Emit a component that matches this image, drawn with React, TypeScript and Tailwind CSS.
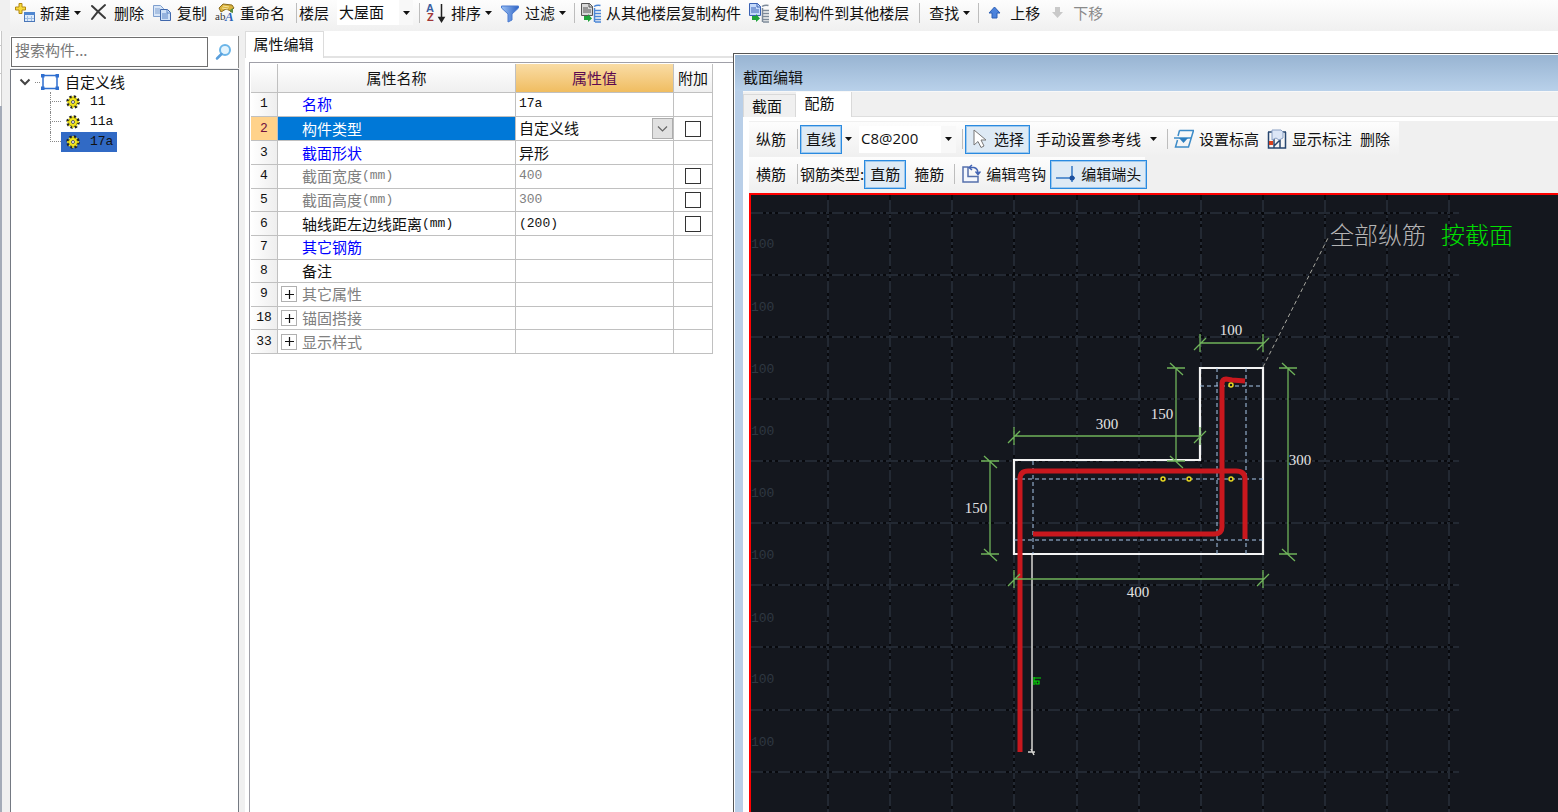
import clsx from 'clsx'
import type { ReactNode } from 'react'

const floors = ['大屋面']
const rebarSpecs = ['C8@200']
const componentTypes = ['自定义线']

interface PropertyRow {
  no: number
  name: string
  unit?: string
  value?: string
  tone?: 'link' | 'muted'
  extra?: boolean
  group?: boolean
  selected?: boolean
}

const properties: PropertyRow[] = [
  { no: 1, name: '名称', value: '17a', tone: 'link' },
  { no: 2, name: '构件类型', value: '自定义线', extra: true, selected: true },
  { no: 3, name: '截面形状', value: '异形', tone: 'link' },
  { no: 4, name: '截面宽度', unit: '(mm)', value: '400', tone: 'muted', extra: true },
  { no: 5, name: '截面高度', unit: '(mm)', value: '300', tone: 'muted', extra: true },
  { no: 6, name: '轴线距左边线距离', unit: '(mm)', value: '(200)', extra: true },
  { no: 7, name: '其它钢筋', tone: 'link' },
  { no: 8, name: '备注' },
  { no: 9, name: '其它属性', tone: 'muted', group: true },
  { no: 18, name: '锚固搭接', tone: 'muted', group: true },
  { no: 33, name: '显示样式', tone: 'muted', group: true },
]

function Caret() {
  return (
    <svg width="7" height="4" viewBox="0 0 7 4" className="shrink-0">
      <path d="M0 0h7L3.5 4z" fill="#111" />
    </svg>
  )
}

function NewIcon() {
  return (
    <svg width="20" height="20" viewBox="0 0 20 20">
      <rect x="9.5" y="9.5" width="10" height="9" fill="#dcebfb" stroke="#4a76b8" />
      <path d="M9 9h11v3H9z" fill="#4f86d0" />
      <path d="M12.5 13v5M16.5 13v5M10 15.5h9" stroke="#9dbce4" />
      <path d="M4 .5h3V4h3.5v3H7v3.500H4V7H.5V4H4z" fill="#f6d93c" stroke="#b58a12" />
    </svg>
  )
}

function DeleteIcon() {
  return (
    <svg width="20" height="20" viewBox="0 0 20 20">
      <path d="M3 3l13 12M16 2C11 6 7 10 3 16" fill="none" stroke="#3a3a3a" strokeWidth="2" strokeLinecap="round" />
    </svg>
  )
}

function CopyIcon() {
  return (
    <svg width="20" height="20" viewBox="0 0 20 20">
      <path d="M1.500 2.500h7l3 3v8h-10z" fill="#d8e6f8" stroke="#7f9fce" />
      <path d="M3 6h5M3 8h5M3 10h5" stroke="#7f9fce" />
      <path d="M8.500 6.500h7l3 3v8h-10z" fill="#cfe0f7" stroke="#3f67ab" />
      <path d="M15 6.500v3.500h3.500M10 11h6M10 13h6M10 15h6" fill="none" stroke="#5b84c6" />
    </svg>
  )
}

function RenameIcon() {
  return (
    <svg width="20" height="20" viewBox="0 0 20 20" className="overflow-visible">
      <path d="M4 5l4-4 9 1 2 3-3 3-5-2-5 3z" fill="#d9b23c" stroke="#8b6c1d" />
      <path d="M8 3l6 1M7 5l6 1" stroke="#f7e49a" />
      <path d="M15 7l3-2v5l-3-1z" fill="#5a8a3e" />
      <text x="0" y="17" fontSize="11" fontFamily="Liberation Serif, serif" fill="#333">ab</text>
      <text x="10" y="18" fontSize="13" fontStyle="italic" fontWeight="700" fontFamily="Liberation Serif, serif" fill="#2d62b8">A</text>
    </svg>
  )
}

function SortIcon() {
  return (
    <svg width="20" height="20" viewBox="0 0 20 20" className="overflow-visible">
      <text x="0" y="9" fontSize="11" fontWeight="700" fontFamily="Liberation Sans, sans-serif" fill="#3b5f9f">A</text>
      <text x="1" y="18" fontSize="11" fontWeight="700" fontFamily="Liberation Sans, sans-serif" fill="#a03636">Z</text>
      <path d="M15.500 1v15M13 14.500h5l-2.500 4z" stroke="#222" strokeWidth="1.500" fill="#222" />
    </svg>
  )
}

function FilterIcon() {
  return (
    <svg width="20" height="20" viewBox="0 0 20 20">
      <defs>
        <linearGradient id="funnel">
          <stop offset="0" stopColor="#9cc2f5" />
          <stop offset="1" stopColor="#2d62c4" />
        </linearGradient>
      </defs>
      <path d="M1.500 3h17v2L12 11v6l-4 2v-8L1.500 5z" fill="url(#funnel)" stroke="#4a7bd0" />
    </svg>
  )
}

function FloorCopyIcon({ page, pageFill, stack }: { page: string, pageFill: string, stack: string }) {
  return (
    <svg width="20" height="20" viewBox="0 0 20 20">
      <path d="M.5.500h8l3 3v9H.5z" fill={pageFill} stroke={page} />
      <path d="M8 0v4h4M2 5h5M2 7h8M2 9h8" fill="none" stroke={page} />
      <path d="M3 13h4v-2l4 4.500L7 19v-2H3z" fill="#20a43a" />
      <path d="M13.500 5v14M13 3.500q3-2 6.500-1M14 7.500h6M14 10.500h6M14 13.500h6M14 16.500h6M14 19h6" stroke={stack} strokeWidth="1.500" fill="none" />
    </svg>
  )
}

function MoveIcon({ down }: { down?: boolean }) {
  return (
    <svg width="20" height="20" viewBox="0 0 20 20">
      {down
        ? <path d="M7 4h5v5h3l-5.500 6L4 9h3z" fill="#c9c9c9" />
        : <path d="M9.500 4l5.500 6h-3v5H7v-5H4z" fill="#4b82dc" stroke="#2c5fb5" />}
    </svg>
  )
}

function Separator({ className = 'mr-[6px]' }: { className?: string }) {
  return <span className={clsx('h-5 w-px shrink-0 bg-[#bdbdbd]', className)} />
}

interface ToolProps {
  icon?: ReactNode
  label: string
  caret?: boolean
  disabled?: boolean
}

function Tool({ icon, label, caret, disabled }: ToolProps) {
  return (
    <button
      type="button"
      disabled={disabled}
      className="mr-2 flex shrink-0 items-center whitespace-nowrap disabled:text-[#8a8a8a]"
    >
      {icon && <span className="mr-[5px]">{icon}</span>}
      {label}
      {caret && <span className="ml-1 flex"><Caret /></span>}
    </button>
  )
}

function MainToolbar() {
  return (
    <div className="ml-[10px] flex h-[31px] shrink-0 items-center overflow-hidden bg-linear-to-b from-[#fdfdfd] to-[#f0f0f0] pb-[6px] pl-[5px]">
      <Tool icon={<NewIcon />} label="新建" caret />
      <Tool icon={<DeleteIcon />} label="删除" />
      <Tool icon={<CopyIcon />} label="复制" />
      <Tool icon={<RenameIcon />} label="重命名" />
      <Separator className="mr-[2px] ml-[3px]" />
      <label htmlFor="floor" className="mr-2 shrink-0">楼层</label>
      <div className="relative mr-[6px] h-[25px] w-[76px] shrink-0 bg-white">
        <select id="floor" className="h-full w-full appearance-none pb-[2px] pl-[2px] outline-none">
          {floors.map(floor => <option key={floor}>{floor}</option>)}
        </select>
        <span className="pointer-events-none absolute inset-y-0 right-0 flex w-[14px] items-center justify-center bg-[#f8f8f8]">
          <Caret />
        </span>
      </div>
      <Separator />
      <Tool icon={<SortIcon />} label="排序" caret />
      <Tool icon={<FilterIcon />} label="过滤" caret />
      <Separator />
      <Tool icon={<FloorCopyIcon page="#555" pageFill="#d9d9d9" stack="#4b86d6" />} label="从其他楼层复制构件" />
      <Tool icon={<FloorCopyIcon page="#3a62b4" pageFill="#c5dafb" stack="#7d8a99" />} label="复制构件到其他楼层" />
      <Separator className="mr-[9px] ml-[2px]" />
      <Tool label="查找" caret />
      <Separator />
      <Tool icon={<MoveIcon />} label="上移" />
      <Tool icon={<MoveIcon down />} label="下移" disabled />
    </div>
  )
}

function Gear() {
  return (
    <svg width="14" height="14" viewBox="0 0 14 14" className="shrink-0">
      <circle cx="7" cy="7" r="5.500" fill="none" stroke="#222" strokeWidth="2.500" strokeDasharray="2.300 2.020" />
      <circle cx="7" cy="7" r="4.500" fill="#f2e51d" stroke="#4c4a08" />
      <path d="M7 1v12M1 7h12M3 3l8 8M11 3l-8 8" stroke="#f2e51d" strokeWidth="1.500" />
      <circle cx="7" cy="7" r="1.500" fill="#fff" stroke="#555" />
    </svg>
  )
}

function ComponentTree() {
  return (
    <aside className="flex w-[229px] shrink-0 flex-col bg-[#f0f0f0] pt-[5px]">
      <div className="flex h-8 shrink-0 border-r border-[#8c8c8c] bg-white">
        <input
          type="text"
          aria-label="搜索构件"
          placeholder="搜索构件..."
          className="my-px ml-px w-[197px] border border-[#6e6e6e] bg-white px-[3px] pb-1 outline-none placeholder:text-[#777]"
        />
        <button type="button" aria-label="搜索" className="flex flex-1 items-center justify-center">
          <svg width="18" height="18" viewBox="0 0 18 18">
            <circle cx="11" cy="7" r="5" fill="#e4f4fd" stroke="#6bb5e8" strokeWidth="2" />
            <path d="M7.500 11L3 15.500" stroke="#5a9fdc" strokeWidth="2.500" strokeLinecap="round" />
          </svg>
        </button>
      </div>
      <div className="mt-px min-h-0 flex-1 border border-b-0 border-[#747982] bg-white pt-[2px] pl-px">
        <div className="flex h-5 items-center pl-[7px]">
          <svg width="12" height="8" viewBox="0 0 12 8">
            <path d="M1.500 1.500L6 6l4.500-4.500" fill="none" stroke="#444" strokeWidth="2" />
          </svg>
          <span className="ml-1 w-[5px] border-t border-dotted border-[#888]" />
          <svg width="20" height="18" viewBox="0 0 20 18" className="mr-[5px]">
            <path d="M3 2.500h14v13H3z" fill="#fff" stroke="#2f6fd0" strokeWidth="1.500" />
            <path d="M1 1h3.500v3.500H1zM15.500 1H19v3.500h-3.500zM1 13.500h3.500V17H1zM15.500 13.500H19V17h-3.500z" fill="#2f6fd0" />
          </svg>
          自定义线
        </div>
        <ul className="ml-[38px]">
          {['11', '11a', '17a'].map((name, i) => (
            <li key={name} className="flex h-5">
              <span className="flex w-[11px] flex-col">
                <span className="h-[10px] border-b border-l border-dotted border-[#888]" />
                {i < 2 && <span className="h-[10px] border-l border-dotted border-[#888]" />}
              </span>
              <button
                type="button"
                className={clsx('flex items-center gap-[10px] pr-1 pl-[5px] font-["Liberation_Mono",monospace] text-[13px]', name === '17a' && 'bg-[#316ac5]')}
              >
                <Gear />
                {name}
              </button>
            </li>
          ))}
        </ul>
      </div>
    </aside>
  )
}

const cell = 'border-r border-b border-[#c0c0c0] p-0'

function PropertyValue({ row }: { row: PropertyRow }) {
  if (row.selected) {
    return (
      <div className="relative flex h-[21px]">
        <select aria-label={row.name} className="w-full appearance-none bg-white pb-[3px] pl-[3px] outline-none">
          {componentTypes.map(type => <option key={type}>{type}</option>)}
        </select>
        <span className="pointer-events-none absolute inset-y-0 right-0 flex w-[21px] items-center justify-center border border-[#adadad] bg-[#e1e1e1]">
          <svg width="11" height="6" viewBox="0 0 11 6">
            <path d="M1 .5l4.500 4.500L10 .5" fill="none" stroke="#666" strokeWidth="1.200" />
          </svg>
        </span>
      </div>
    )
  }
  return (
    <span className={clsx('block pl-[3px] leading-5', row.no !== 3 && 'font-["Liberation_Mono",monospace] text-[13px]')}>
      {row.value}
    </span>
  )
}

function PropertyPanel() {
  return (
    <section className="flex w-[488px] shrink-0 flex-col bg-white">
      <div className="flex h-[27px] shrink-0">
        <button type="button" role="tab" className="w-[79px] border-t border-r border-l border-[#dcdcdc] pr-[2px] pb-[3px]">
          属性编辑
        </button>
        <span className="flex-1 border-b-2 border-[#e3e3e3]" />
      </div>
      <div className="mt-[4px] ml-1 flex-1 border-t border-l border-[#a0a0a8] pt-px pl-px">
        <table className="h-[290px] w-[462px] table-fixed border-separate border-spacing-0">
          <colgroup>
            <col className="w-[27px]" />
            <col className="w-[238px]" />
            <col className="w-[158px]" />
            <col className="w-[39px]" />
          </colgroup>
          <thead>
            <tr className="h-[29px] bg-linear-to-b from-white to-[#efefef]">
              <th className={cell} />
              <th className={clsx(cell, 'font-normal')}>属性名称</th>
              <th className={clsx(cell, 'bg-linear-to-b from-[#f9dca4] to-[#f0bd60] font-normal text-[#5c0a50]')}>属性值</th>
              <th className={clsx(cell, 'font-normal whitespace-nowrap')}>附加</th>
            </tr>
          </thead>
          <tbody>
            {properties.map(row => (
              <tr key={row.no}>
                <th
                  scope="row"
                  className={clsx(
                    cell,
                    'font-["Liberation_Mono",monospace] text-[13px] leading-5 font-normal',
                    row.selected ? 'bg-[#ffd28a] text-[#701040]' : 'bg-linear-to-r from-white to-[#eeeeee]',
                  )}
                >
                  {row.no}
                </th>
                <td
                  className={clsx(
                    cell,
                    row.selected && 'bg-[#0078d7] text-white',
                    row.tone === 'link' && 'text-[#0000ff]',
                    row.tone === 'muted' && 'text-[#808080]',
                  )}
                >
                  <div className="flex h-5 items-center">
                    <span className="flex w-6 pl-[3px]">
                      {row.group && (
                        <button type="button" aria-label={`展开${row.name}`} className="flex size-4 items-center justify-center border border-[#b0b0b0]">
                          <svg width="9" height="9" viewBox="0 0 9 9">
                            <path d="M0 4.500h9M4.500 0v9" stroke="#111" strokeWidth="1.200" />
                          </svg>
                        </button>
                      )}
                    </span>
                    {row.name}
                    <span className="font-['Liberation_Mono',monospace] text-[13px]">{row.unit}</span>
                  </div>
                </td>
                <td className={clsx(cell, row.tone === 'muted' && 'text-[#808080]')}>
                  <PropertyValue row={row} />
                </td>
                <td className={cell}>
                  {row.extra && (
                    <input
                      type="checkbox"
                      aria-label={`附加${row.name}`}
                      className="mx-auto block size-4 appearance-none border border-[#333] bg-white"
                    />
                  )}
                </td>
              </tr>
            ))}
          </tbody>
        </table>
      </div>
    </section>
  )
}

const gridX = [828, 890, 952, 1014, 1077, 1139, 1201, 1263, 1325, 1387, 1449]
const gridY = [213, 275, 337, 399, 461, 523, 585, 647, 710, 772]
const scaleY = [244, 307, 369, 431, 493, 555, 618, 679, 742]

// Horizontal dimension line with a slash across each end
function DimH({ x1, x2, y }: { x1: number, x2: number, y: number }) {
  return (
    <path
      d={`M${x1} ${y}H${x2}M${x1} ${y - 9}v18M${x2} ${y - 9}v18M${x1 - 6} ${y + 7}l12 -12M${x2 - 6} ${y + 7}l12 -12`}
    />
  )
}

function DimV({ x, y1, y2 }: { x: number, y1: number, y2: number }) {
  return (
    <path
      d={`M${x} ${y1}V${y2}M${x - 9} ${y1}h18M${x - 9} ${y2}h18M${x - 6} ${y1 - 5}l13 12M${x - 6} ${y2 - 5}l13 12`}
    />
  )
}

function SectionCanvas() {
  return (
    <div className="min-h-0 flex-1 overflow-hidden border-t-2 border-l-2 border-[#ff0000] bg-[#14171e]">
      <svg width="807" height="617" viewBox="751 195 807 617">
        <g strokeWidth="1.500" fill="none">
          {gridX.map(x => (
            <g key={x}>
              <path d={`M${x} 195V812`} stroke="#050608" />
              <path d={`M${x} 200V812`} stroke="#2c3540" strokeDasharray="12 3 3 3 3 3" />
            </g>
          ))}
          {gridY.map(y => (
            <g key={y}>
              <path d={`M751 ${y}H1459`} stroke="#050608" />
              <path d={`M751 ${y}H1459`} stroke="#2c3540" strokeDasharray="12 3 3 3 3 3" />
            </g>
          ))}
        </g>
        <g fill="#2f3842" fontSize="13" fontFamily="Liberation Mono, monospace">
          {scaleY.map(y => <text key={y} x="751" y={y + 4}>100</text>)}
        </g>

        <path d="M1032 554V752M1028 752h7M1031 749l3 6" stroke="#d8d8d4" strokeWidth="1.500" fill="none" />
        <path d="M1014 460H1200V368H1263V554H1014z" fill="none" stroke="#f4f4f4" strokeWidth="2.200" />
        <path
          d="M1014 479H1263M1014 540H1263M1200 386H1263M1033 461V554M1217 368V554M1246 368V554"
          fill="none"
          stroke="#a8c8ea"
          strokeDasharray="4 3"
        />
        <path d="M1263 367L1328 238" stroke="#a8a8a0" strokeDasharray="4 3" />

        <g stroke="#c9181e" strokeWidth="5" fill="none">
          <path d="M1020 752V479q0-8 8-8H1236q9 0 9 8V539" />
          <path d="M1033 534H1214q8 0 8-7V384q0-5 4-5l6 1 13 1" />
        </g>
        <g stroke="#e8d820" strokeWidth="1.500" fill="#14171e">
          <circle cx="1163" cy="479" r="2" />
          <circle cx="1189" cy="479" r="2" />
          <circle cx="1231" cy="479" r="2" />
          <circle cx="1231" cy="385" r="2" />
        </g>
        <g stroke="#6fb35a" strokeWidth="1.300" fill="none">
          <DimH x1={1200} x2={1263} y={343} />
          <DimH x1={1014} x2={1200} y={436} />
          <DimH x1={1014} x2={1263} y={579} />
          <DimV x={1176} y1={368} y2={461} />
          <DimV x={990} y1={461} y2={554} />
          <DimV x={1288} y1={368} y2={554} />
        </g>
        <g fill="#e4e4e4" fontSize="15" textAnchor="middle" fontFamily="Liberation Serif, serif">
          <text x="1231" y="335">100</text>
          <text x="1107" y="429">300</text>
          <text x="1162" y="419">150</text>
          <text x="976" y="513">150</text>
          <text x="1300" y="465">300</text>
          <text x="1138" y="597">400</text>
        </g>
        <path d="M1034 677v8M1034 678h7M1034 681h5v3h-3v-3" stroke="#00e000" strokeWidth="1.200" fill="none" />
        <g fontSize="24" fontWeight="300">
          <text x="1330" y="244" fill="#b4b4b4">全部纵筋</text>
          <text x="1441" y="244" fill="#00e000">按截面</text>
        </g>
      </svg>
    </div>
  )
}

function PressedTool({ children }: { children: ReactNode }) {
  return (
    <button
      type="button"
      aria-pressed="true"
      className="flex h-[29px] shrink-0 items-center border border-[#2a8ae0] bg-[#deeaf5] px-[5px] whitespace-nowrap outline-1 -outline-offset-2 outline-[#9cc8ee]"
    >
      {children}
    </button>
  )
}

const strip = 'flex h-[34px] shrink-0 items-center bg-linear-to-b from-[#fdfdfd] to-[#f0f0f0] pl-[7px] whitespace-nowrap'

function SectionDialog() {
  return (
    <section className="mt-[22px] flex min-w-0 flex-1 flex-col border-t border-l border-[#555]">
      <div className="flex min-h-0 flex-1 flex-col border-t border-l border-white bg-[#b9cfe8]">
        <h2 className="flex h-9 shrink-0 items-center bg-linear-to-b from-[#98b4d2] to-[#b9d1ea] pt-2 pl-2">截面编辑</h2>
        <div className="ml-2 flex min-h-0 flex-1 flex-col bg-[#f0f0f0]">
          <div className="flex h-[26px] shrink-0 items-end border-t border-[#f8f8f8]" role="tablist">
            <button type="button" role="tab" className="h-[23px] w-[53px] border border-b-0 border-[#d9d9d9] pr-[5px]">截面</button>
            <button type="button" role="tab" aria-selected="true" className="h-full w-14 border-r border-[#d9d9d9] bg-white pr-[8px] pb-[3px]">配筋</button>
            <span className="h-px flex-1 bg-[#dedede]" />
          </div>
          <div className="flex min-h-0 flex-1 flex-col border-t-4 border-l-[6px] border-white">
            <div className={clsx(strip, 'mt-px w-[650px]')}>
              <span className="shrink-0">纵筋</span>
              <Separator className="mr-[2px] ml-[11px]" />
              <PressedTool>直线</PressedTool>
              <button type="button" aria-label="直线选项" className="mx-[3px]"><Caret /></button>
              <div className="relative mr-[6px] ml-1 h-[27px] w-[97px] shrink-0 bg-white">
                <select aria-label="钢筋信息" className='h-full w-full appearance-none pb-[2px] pl-[2px] font-["Open_Sans",sans-serif] outline-none'>
                  {rebarSpecs.map(spec => <option key={spec}>{spec}</option>)}
                </select>
                <span className="pointer-events-none absolute inset-y-0 right-0 flex w-[15px] items-center justify-center bg-[#f8f8f8]">
                  <Caret />
                </span>
              </div>
              <Separator className="mr-[2px]" />
              <PressedTool>
                <svg width="18" height="22" viewBox="0 0 18 22" className="mr-[5px]">
                  <path d="M3 2v15l4-3.500 3 6 3-1.500-3-6h5z" fill="#fff" stroke="#777" />
                </svg>
                选择
              </PressedTool>
              <button type="button" className="mr-[10px] ml-[6px] flex shrink-0 items-center gap-[9px]">
                手动设置参考线
                <Caret />
              </button>
              <Separator />
              <Tool
                label="设置标高"
                icon={(
                  <svg width="20" height="20" viewBox="0 0 20 20">
                    <path d="M5.500 1.500h14L14.500 18H1.500l2-7M5.500 1.500L4 7" fill="none" stroke="#3e8cc8" strokeWidth="1.500" />
                    <path d="M0 9h17" stroke="#3e8cc8" strokeWidth="1.500" />
                    <path d="M5 9h9l-4.500 5z" fill="#2e7fc0" />
                  </svg>
                )}
              />
              <Tool
                label="显示标注"
                icon={(
                  <svg width="20" height="20" viewBox="0 0 20 20">
                    <path d="M1.500 3v16h17V3M1 3h4M15 3h4M7 19V9M13 19V9M7 17l6-6" fill="none" stroke="#27466f" strokeWidth="1.500" />
                    <path d="M5 1h9l2 2v6l-4 2-3-2-4 2z" fill="#dce6f6" stroke="#8aa0c4" />
                    <path d="M2 12h4v4H2z" fill="#d8401c" />
                  </svg>
                )}
              />
              <Tool label="删除" />
            </div>
            <div className={clsx(strip, 'mt-px mb-[2px] w-[396px]')}>
              <span className="shrink-0">横筋</span>
              <Separator className="mr-[2px] ml-[11px]" />
              <span className="shrink-0">钢筋类型:</span>
              <PressedTool>直筋</PressedTool>
              <button type="button" className="mr-[10px] ml-2 shrink-0">箍筋</button>
              <Separator />
              <Tool
                label="编辑弯钩"
                icon={(
                  <svg width="20" height="20" viewBox="0 0 20 20">
                    <path d="M2 3h5v9.500h10V18H2z" fill="#f4f7fd" stroke="#5570ac" strokeWidth="1.500" />
                    <path d="M8 3.500h5q4 1 4 6M11 1L8 3.500 11 6M14.500 7.500l2.500 3 2.500-3" fill="none" stroke="#4465b4" strokeWidth="1.500" />
                  </svg>
                )}
              />
              <div className="-ml-1">
                <PressedTool>
                  <svg width="20" height="20" viewBox="0 0 20 20" className="mr-[5px]">
                    <path d="M0 14h19M16 2v16" stroke="#3377c4" strokeWidth="1.500" />
                    <circle cx="16" cy="14" r="2.500" fill="#1c4f9e" />
                  </svg>
                  编辑端头
                </PressedTool>
              </div>
            </div>
            <SectionCanvas />
          </div>
        </div>
      </div>
    </section>
  )
}

export default function App() {
  return (
    <main className='flex h-screen flex-col overflow-hidden bg-[#f0f0f0] font-["Noto_Sans_CJK_SC",sans-serif] text-[15px] leading-5 text-[#111]'>
      <MainToolbar />
      <div className="flex min-h-0 flex-1 bg-white">
        <div className="w-[10px] shrink-0 bg-[#f0f0f0]">
          <div className="h-[14px] w-[2px] border-r border-[#c8c8c8] bg-white" />
          <div className="h-[28px] w-[2px] border-t border-r border-[#c8c8c8] bg-white" />
          <div className="h-[33px] w-[2px] border-t border-r border-[#c8c8c8] bg-white" />
          <div className="h-full w-[2px] bg-[#a4abb8]" />
        </div>
        <ComponentTree />
        <div className="w-[6px] shrink-0 bg-[#f0f0f0]" />
        <PropertyPanel />
        <SectionDialog />
      </div>
    </main>
  )
}
